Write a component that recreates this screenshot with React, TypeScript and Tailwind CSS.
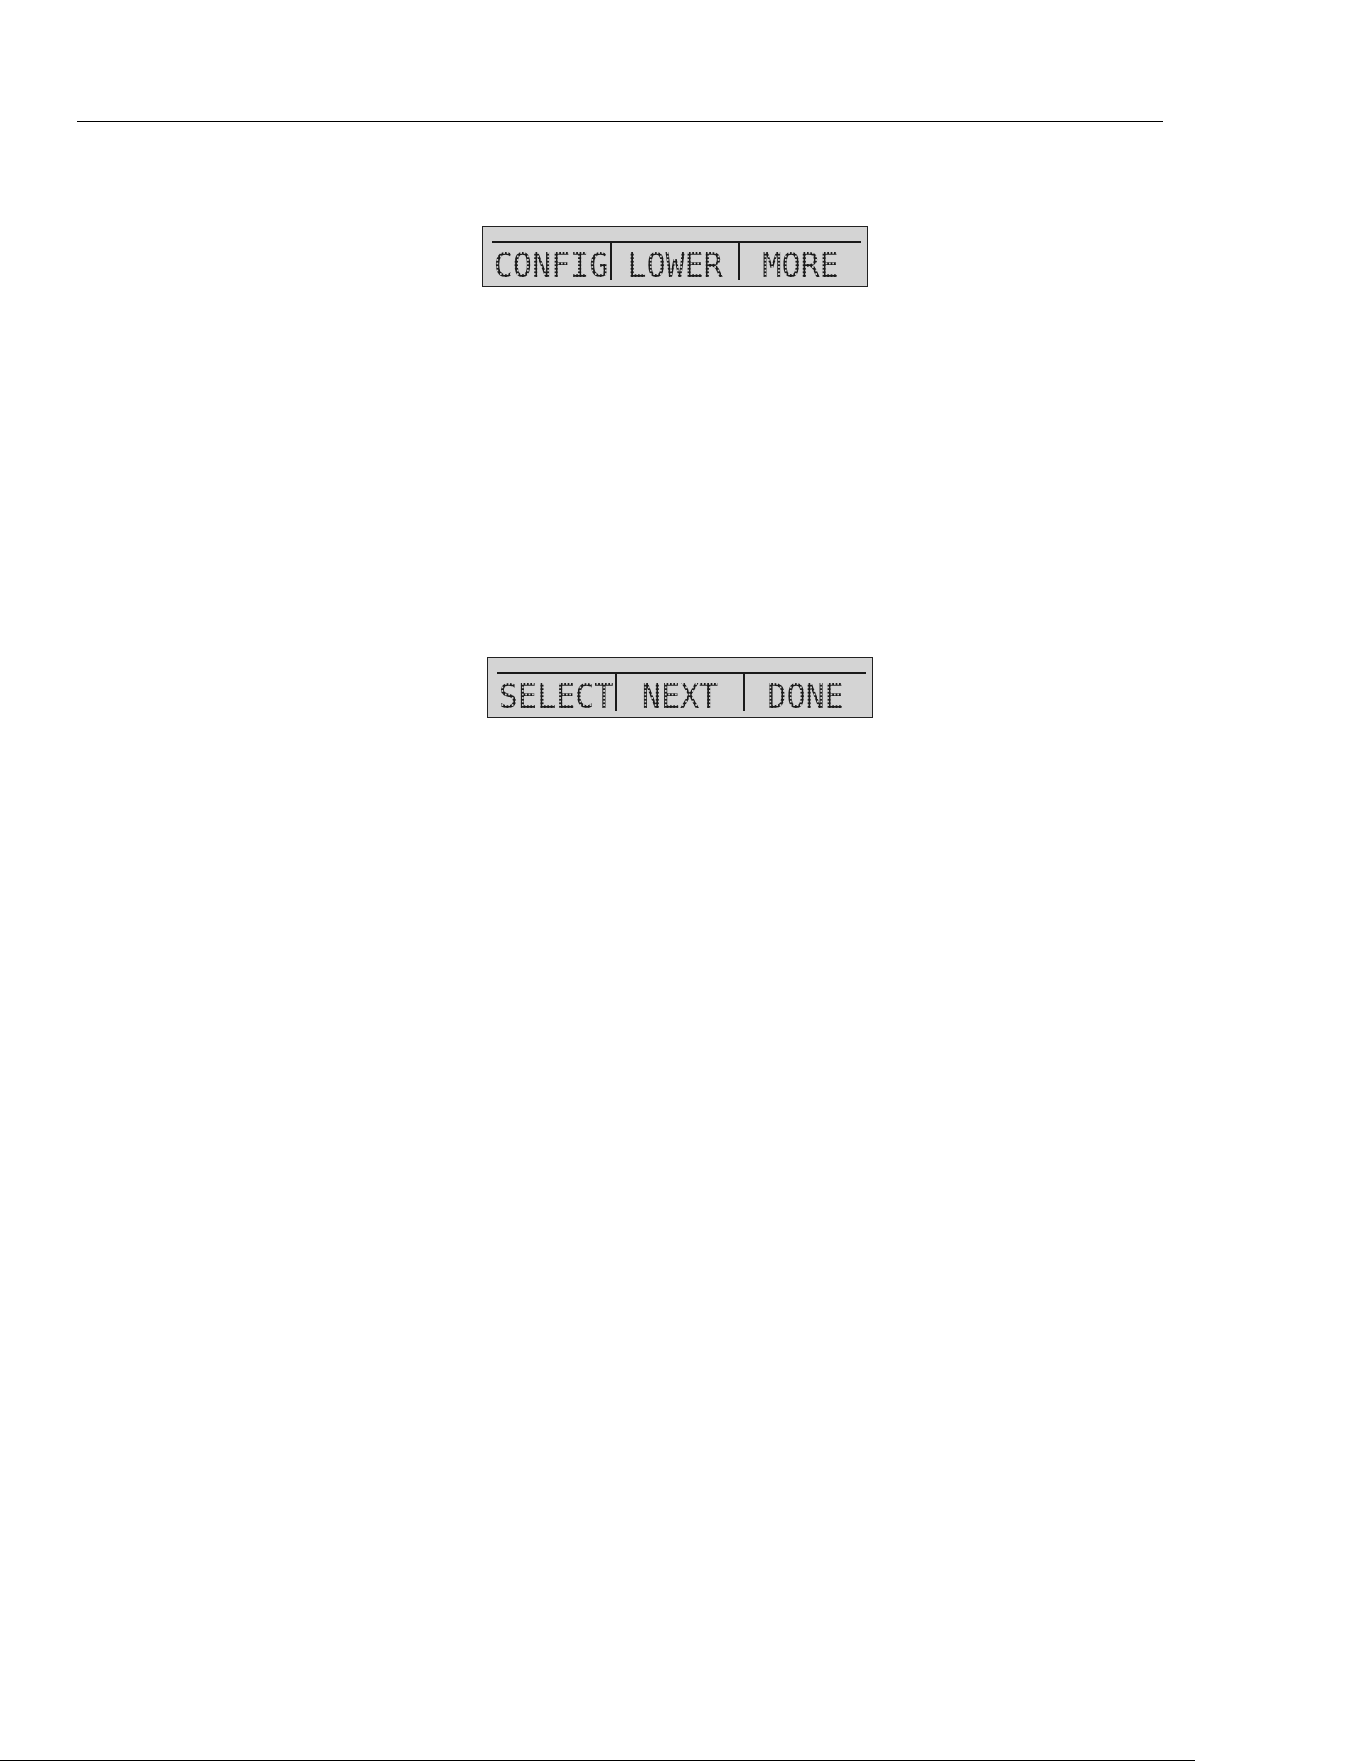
import React from 'react';

const lcdText =
  "font-['DejaVu_Sans_Mono',monospace] text-[32px] leading-none tracking-[-0.2px] scale-y-[1.04] text-transparent bg-clip-text bg-[radial-gradient(circle,#1a1a1a_1.55px,transparent_1.8px)] bg-[length:3.4px_3.4px]";

function SoftKeys({ labels }: { labels: string[] }) {
  return (
    <div className="w-[386px] h-[61px] border-[1.5px] border-[#222] bg-[#d4d4d4] pl-[9px] pr-[6px] pt-[14px]">
      <div className="grid grid-cols-[120px_128px_1fr] grid-rows-[37px] h-[39px] border-t-2 border-[#1a1a1a]">
        {labels.map((label, i) => (
          <div
            key={label}
            className={
              'flex justify-center items-start pt-[7px] ' +
              (i < 2 ? 'border-r-[2.5px] border-[#1a1a1a]' : '')
            }
          >
            <span className={lcdText}>{label}</span>
          </div>
        ))}
      </div>
    </div>
  );
}

export default function App() {
  return (
    <div className="min-h-[1761px] bg-white flex flex-col">
      <div className="mt-[121px] ml-[77px] w-[1086px] h-px bg-black" />

      <div className="mt-[104px] ml-[482px]">
        <SoftKeys labels={['CONFIG', 'LOWER', 'MORE']} />
      </div>

      <div className="mt-[370px] ml-[487px]">
        <SoftKeys labels={['SELECT', 'NEXT', 'DONE']} />
      </div>

      <div className="mt-auto w-[1195px] h-px bg-black" />
    </div>
  );
}
